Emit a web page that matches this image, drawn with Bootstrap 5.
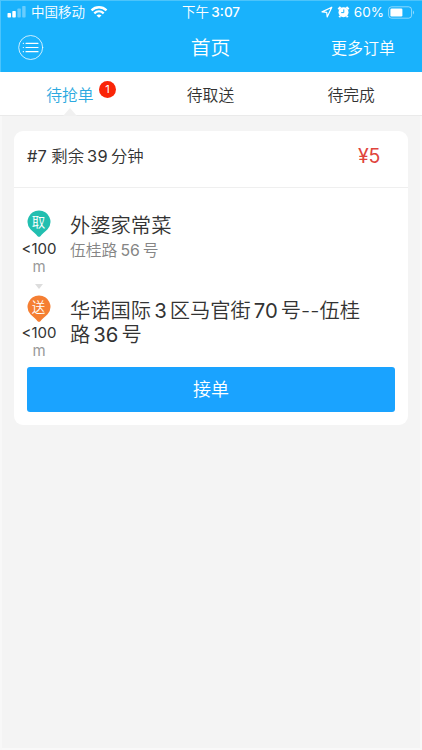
<!DOCTYPE html>
<html lang="zh-CN">
<head>
<meta charset="utf-8">
<meta name="viewport" content="width=device-width, initial-scale=1">
<title>首页</title>
<link rel="stylesheet" href="https://cdn.jsdelivr.net/npm/bootstrap@5.3.0/dist/css/bootstrap.min.css">
<style>
body{font-family:Inter,"Noto Sans CJK SC",sans-serif;font-weight:350;background:#f4f4f4;color:#333;height:750px;overflow:hidden;box-shadow:inset 2px 0 #f8f8f8,inset -2px 0 #f8f8f8,inset 0 -2px #f9f9f9}
svg{display:block;flex:none}
.app-head{background:#19b2fc;color:#fff;height:72px;box-shadow:inset 1px 1px #4cc4fb}
.status-row{height:24px;font-size:13.5px;line-height:24px;padding:0 7px}
.status-row>div{flex:1 1 0}
.clock b{font-weight:500}
.title-row{height:48px;padding:0 27px 0 18px}
.title-row>div{flex:1 1 0}
.page-title{font-size:19.8px;line-height:28px;font-weight:350}
.more-link{font-size:16px;line-height:24px;color:#fff;text-decoration:none}
.tab-strip{height:44px;background:#fff;border-bottom:1px solid #eaeaea}
.tab-strip .nav-link{padding:2px 1px 0 0;height:44px;color:#333;font-size:15.8px;line-height:43px;position:relative;border-radius:0}
.tab-strip .nav-link.active{color:#2ba9e0;background:none}
.tab-strip .nav-link.active::after{content:"";position:absolute;left:50%;bottom:0;margin-left:-7px;border:7px solid transparent;border-top:0;border-bottom:8px solid #f0f0f0}
.count-dot{position:absolute;left:99px;top:9px;width:17px;height:17px;line-height:17px;font-size:11px;border-radius:50%;background:#fa2507;color:#fff;text-align:center}
.order{margin:15px 14px 0;border:0;border-radius:9px;height:294px;background:#fff;color:#333}
.order-head{height:57px;padding:0 28px 6px 13px;border-bottom:1px solid #efefef;font-size:16.4px}
.num{margin:0 3px}
.num,.dist,.unit,.price,.count-dot,.latin{font-weight:400}
.order-head .num{letter-spacing:.3px}
.price{font-size:19.5px;color:#e0443c;letter-spacing:-.3px;padding-top:1px}
.stops{height:179px;padding:22px 0 0 8px}
.stop{height:85px}
.rail{width:34px;margin-right:14px}
.dist{font-size:15px;line-height:18px;margin-top:3px;white-space:nowrap}
.unit{font-size:15px;line-height:18px;color:#999}
.stop+.stop .dist{margin-top:2px}
.place{font-size:20.3px;line-height:24px}
.addr{font-size:15.8px;line-height:24px;color:#858585;margin-top:1px}
.tick{border:4px solid transparent;border-bottom:0;border-top:5px solid #ddd;margin-top:8px}
.take{margin:0 13px;height:45px;border:0;border-radius:3px;background:#1aa3ff;color:#fff;font-size:18px;font-weight:350;line-height:45px;padding:0}
.take:hover{background:#1aa3ff;color:#fff}
.pin-text{font-family:"Noto Sans CJK SC",sans-serif;font-size:13.5px;fill:#fff;text-anchor:middle}
</style>
</head>
<body>
<header class="app-head">
  <div class="status-row d-flex align-items-center">
    <div class="d-flex align-items-center">
      <svg width="20" height="12" viewBox="0 0 20 12" fill="#fff"><rect x=".5" y="7" width="3.5" height="4.5" rx=".7"/><rect x="5.3" y="5" width="3.5" height="6.5" rx=".7"/><g opacity=".35"><rect x="10.4" y="2.5" width="3.4" height="9" rx=".7"/><rect x="15.2" y="0" width="3.4" height="11.5" rx=".7"/></g></svg>
      <span class="ms-1">中国移动</span>
      <svg class="ms-1" width="19" height="12" viewBox="-1.5 0 19 12" fill="none" stroke="#fff" stroke-width="2.3"><path d="M1 4.4C5.2.2 11.8.2 16 4.4M3.8 7.3c2.7-2.5 6.7-2.5 9.4 0"/><path d="M8.5 11.8 6 9.4c1.5-1.3 3.5-1.3 5 0z" fill="#fff" stroke="none"/></svg>
    </div>
    <span class="clock text-nowrap">下午&thinsp;<b>3:07</b></span>
    <div class="d-flex align-items-center justify-content-end">
      <svg width="12" height="12" viewBox="0 0 12 12" fill="none" stroke="#fff" stroke-width="1.2" stroke-linejoin="round"><path d="M1 5.9 10.8 1.2 6.2 11 5.7 6.3z"/></svg>
      <svg class="mx-1" width="13" height="12" viewBox="0 0 13 12"><path d="M1.3 3.3 3.6 1M11.7 3.3 9.4 1M3.2 10l-.9 1.3M9.8 10l.9 1.3" stroke="#fff" stroke-width="2"/><circle cx="6.5" cy="6.2" r="5" fill="#fff"/><path d="M6.8 3.4v3.2H4.2" fill="none" stroke="#19b2fc" stroke-width="1"/></svg>
      <span class="latin">60%</span>
      <svg class="ms-1" width="27" height="13" viewBox="0 0 27 13"><rect x=".6" y=".8" width="23" height="11.4" rx="3" fill="none" stroke="#fff" stroke-opacity=".5"/><rect x="2.4" y="2.6" width="12" height="7.8" rx="1.2" fill="#fff"/><path d="M25 4.5q2 2 0 4z" fill="#fff" opacity=".55"/></svg>
    </div>
  </div>
  <div class="title-row d-flex align-items-center">
    <div><svg width="26" height="26" viewBox="0 0 26 26" fill="none" stroke="#fff" stroke-linecap="round"><circle cx="12.7" cy="12.5" r="12" stroke-width=".9" opacity=".85"/><path d="M8 8.3h12M8 12.5h12M8 16.7h12M5.3 8.3h.1M5.3 12.5h.1M5.3 16.7h.1" stroke-width="1.2"/></svg></div>
    <h1 class="page-title m-0 ps-2">首页</h1>
    <div class="text-end"><a class="more-link" href="#">更多订单</a></div>
  </div>
</header>
<nav class="tab-strip nav nav-fill flex-nowrap">
  <a class="nav-link active col-4" href="#">待抢单<span class="count-dot">1</span></a>
  <a class="nav-link col-4" href="#">待取送</a>
  <a class="nav-link col-4" href="#">待完成</a>
</nav>
<main class="order card">
  <div class="order-head d-flex align-items-center justify-content-between">
    <span><span class="latin">#7</span> 剩余<span class="num">39</span>分钟</span>
    <span class="price">¥5</span>
  </div>
  <div class="stops">
    <div class="stop d-flex">
      <div class="rail d-flex flex-column align-items-center">
        <svg width="24" height="27" viewBox="0 0 24 27"><path d="M12 .5a11.3 11.3 0 0 0-8.6 18.7c2.3 2.6 5.6 4.4 7.2 7.1q1.4 1 2.8 0c1.6-2.7 4.9-4.5 7.2-7.1A11.3 11.3 0 0 0 12 .5z" fill="#22bfb0"/><text class="pin-text" x="11.6" y="17">取</text></svg>
        <div class="dist">&lt;100</div>
        <div class="unit">m</div>
        <div class="tick"></div>
      </div>
      <div><div class="place mt-1">外婆家常菜</div><div class="addr">伍桂路<span class="num">56</span>号</div></div>
    </div>
    <div class="stop d-flex">
      <div class="rail d-flex flex-column align-items-center">
        <svg width="24" height="27" viewBox="0 0 24 27"><path d="M12 .5a11.3 11.3 0 0 0-8.6 18.7c2.3 2.6 5.6 4.4 7.2 7.1q1.4 1 2.8 0c1.6-2.7 4.9-4.5 7.2-7.1A11.3 11.3 0 0 0 12 .5z" fill="#f57f33"/><text class="pin-text" x="11.6" y="17">送</text></svg>
        <div class="dist">&lt;100</div>
        <div class="unit">m</div>
      </div>
      <div class="place mt-1 text-nowrap">华诺国际<span class="num">3</span>区马官街<span class="num">70</span>号--伍桂<br>路<span class="num">36</span>号</div>
    </div>
  </div>
  <button class="take btn" type="button">接单</button>
</main>
<script src="https://cdn.jsdelivr.net/npm/bootstrap@5.3.0/dist/js/bootstrap.bundle.min.js"></script>
</body>
</html>
